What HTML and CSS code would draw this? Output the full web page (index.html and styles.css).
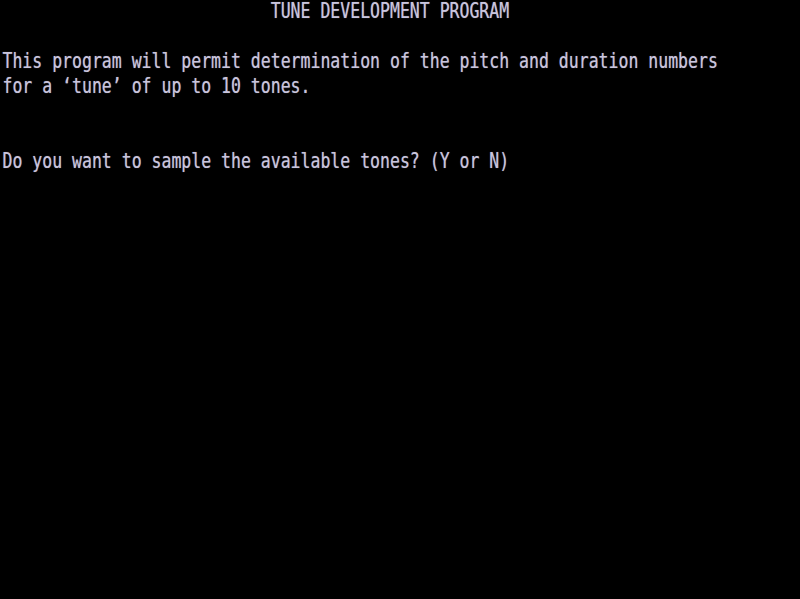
FILE: index.html
```html
<!DOCTYPE html>
<html>
<head>
<meta charset="utf-8">
<title>Tune Development Program</title>
<link rel="stylesheet" href="styles.css">
</head>
<body>
<main class="screen">
  <div class="line title">TUNE DEVELOPMENT PROGRAM</div>
  <div class="line"></div>
  <div class="line">This program will permit determination of the pitch and duration numbers</div>
  <div class="line">for a ‘tune’ of up to 10 tones.</div>
  <div class="line"></div>
  <div class="line"></div>
  <div class="line">Do you want to sample the available tones? (Y or N)</div>
</main>
</body>
</html>
```
FILE: styles.css
```css
html, body {
  margin: 0;
  padding: 0;
  background: #000;
  height: 100%;
  overflow: hidden;
}

.screen {
  width: 800px;
  height: 599px;
  overflow: hidden;
  font-family: "DejaVu Sans Mono", "Liberation Mono", monospace;
  font-size: 20.5px;
  line-height: 25px;
  color: #c9c5de;
  text-shadow: 0 0 1px rgba(201, 197, 222, 0.6);
}

.line {
  box-sizing: border-box;
  height: 25px;
  white-space: pre;
  width: 80ch;
  transform: translateY(-1px) scaleX(0.805);
  transform-origin: 0 0;
  padding-left: 0.25ch;
}

.title {
  padding-left: 27.25ch;
}
```
